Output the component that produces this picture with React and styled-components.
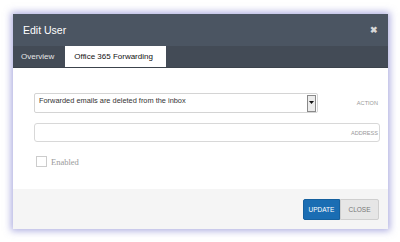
import React from "react";
import styled, { createGlobalStyle } from "styled-components";

const Global = createGlobalStyle`
  html, body { margin: 0; padding: 0; background: #fff; }
  body { font-family: "Liberation Sans", Arial, sans-serif; }
`;

export default function App() {
  return (
    <>
      <Global />
      <Page>
        <Dialog>
          <Header>
            <h1>Edit User</h1>
            <span className="close">✖</span>
          </Header>
          <Tabs>
            <Tab>Overview</Tab>
            <Tab active>Office 365 Forwarding</Tab>
          </Tabs>

          <Body>
            <Row>
              <Select>
                <span>Forwarded emails are deleted from the inbox</span>
                <Arrow>
                  <svg width="5" height="3" viewBox="0 0 5 3">
                    <path d="M0 0h5L2.5 3z" fill="#111" />
                  </svg>
                </Arrow>
              </Select>
              <Label>Action</Label>
            </Row>
            <Input>
              <Label>Address</Label>
            </Input>
            <Check>
              <div className="box" />
              <span>Enabled</span>
            </Check>
          </Body>

          <Footer>
            <Button primary>Update</Button>
            <Button>Close</Button>
          </Footer>
        </Dialog>
      </Page>
    </>
  );
}

const Page = styled.div`
  padding: 14px 12px 12px 13px;
`;

const Dialog = styled.div`
  width: 375px;
  background: #fff;
  box-shadow: 0 0 7px 2px rgba(110, 110, 200, 0.55);
  display: flex;
  flex-direction: column;
`;

const Header = styled.div`
  height: 32px;
  background: #4b5562;
  display: flex;
  align-items: center;
  justify-content: space-between;
  padding: 0 10px 0 10px;

  h1 {
    margin: 0;
    font-size: 10.5px;
    font-weight: normal;
    color: #fff;
  }

  .close {
    color: #d8d8d8;
    font-size: 9px;
    font-weight: bold;
  }
`;

const Tabs = styled.div`
  height: 22px;
  background: #434b56;
  display: flex;
  align-items: flex-end;
  padding-left: 8px;
  gap: 11px;
  border-bottom: 1px solid #3c434c;
  box-sizing: border-box;
`;

const Tab = styled.div`
  font-size: 8px;
  height: 21px;
  display: flex;
  align-items: center;
  white-space: nowrap;
  color: ${(p) => (p.active ? "#111" : "#e6e6e6")};
  background: ${(p) => (p.active ? "#fff" : "transparent")};
  padding: ${(p) => (p.active ? "0 8px 0 9px" : "0")};
  width: ${(p) => (p.active ? "101px" : "auto")};
  box-sizing: border-box;
`;

const Body = styled.div`
  padding: 25px 8px 22px 21px;
  display: flex;
  flex-direction: column;
`;

const Row = styled.div`
  display: flex;
  align-items: center;
`;

const Select = styled.div`
  width: 284px;
  height: 20px;
  box-sizing: border-box;
  border: 1px solid #d4d4d4;
  border-radius: 2px;
  display: flex;
  justify-content: space-between;
  align-items: flex-start;
  padding: 2px 1px 0 4px;
  font-size: 7.4px;
  color: #333;
`;

const Arrow = styled.div`
  width: 9px;
  height: 17px;
  margin-top: -1px;
  box-sizing: border-box;
  border: 1px solid #8a8a8a;
  background: #ececec;
  display: flex;
  justify-content: center;
  padding-top: 5px;
`;

const Label = styled.span`
  font-size: 5.6px;
  text-transform: uppercase;
  color: #999;
  margin-left: auto;
  margin-right: 2px;
`;

const Input = styled.div`
  margin-top: 10px;
  width: 346px;
  height: 19px;
  box-sizing: border-box;
  border: 1px solid #d8d8d8;
  border-radius: 3px;
  display: flex;
  align-items: center;

  span {
    margin-right: 1px;
  }
`;

const Check = styled.div`
  margin-top: 14px;
  margin-left: 2px;
  display: flex;
  align-items: center;
  gap: 4px;

  .box {
    width: 11px;
    height: 11px;
    box-sizing: border-box;
    border: 1px solid #ccc;
    background: #fff;
  }

  span {
    font-family: "Liberation Serif", "Times New Roman", serif;
    font-size: 8.5px;
    color: #9a9a9a;
  }
`;

const Footer = styled.div`
  height: 40px;
  background: #f5f5f5;
  display: flex;
  justify-content: flex-end;
  align-items: center;
  padding-right: 9px;
`;

const Button = styled.div`
  height: 21px;
  box-sizing: border-box;
  display: flex;
  align-items: center;
  justify-content: center;
  width: ${(p) => (p.primary ? "37px" : "39px")};
  font-size: 6.5px;
  text-transform: uppercase;
  color: ${(p) => (p.primary ? "#fff" : "#777")};
  background: ${(p) => (p.primary ? "#1a6db3" : "#e6e6e6")};
  border: 1px solid ${(p) => (p.primary ? "#15609e" : "#cfcfcf")};
  border-radius: ${(p) => (p.primary ? "2px 0 0 2px" : "0 2px 2px 0")};
`;
